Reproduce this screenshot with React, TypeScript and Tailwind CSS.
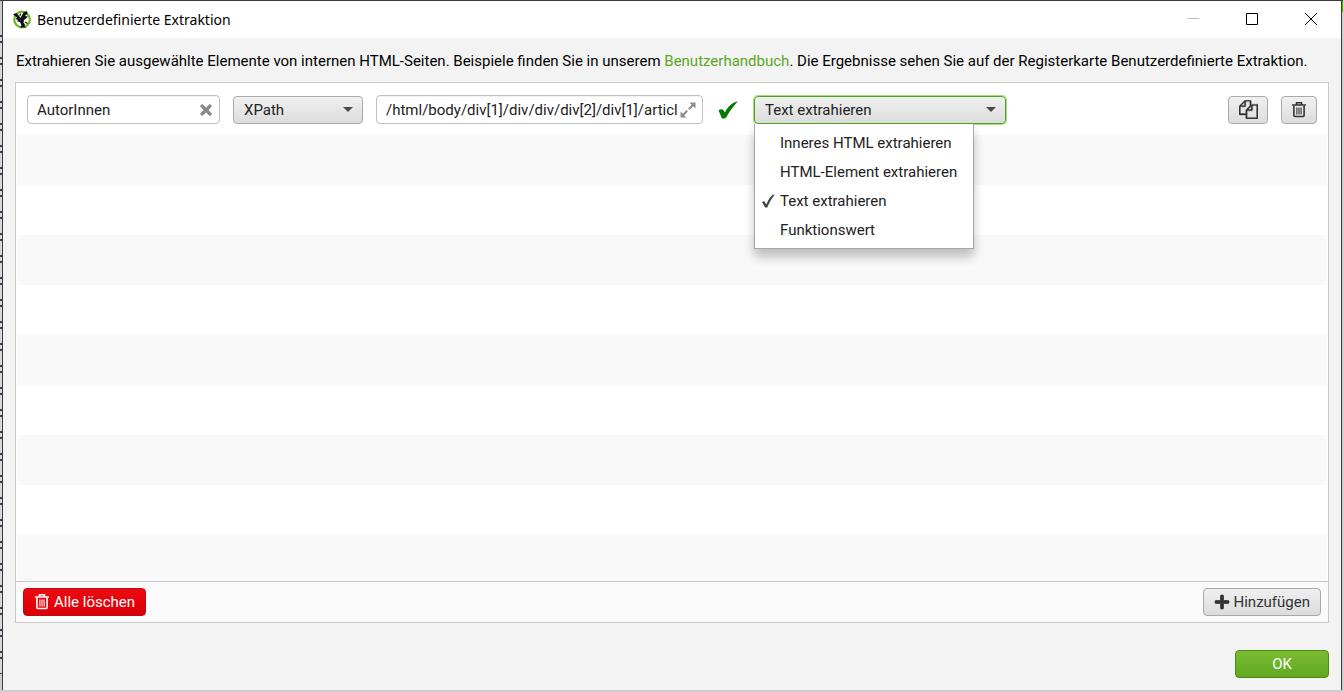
import React, { useState } from 'react';
import { FaPlus, FaTimes } from 'react-icons/fa';

const extractModes = [
  'Inneres HTML extrahieren',
  'HTML-Element extrahieren',
  'Text extrahieren',
  'Funktionswert',
];

const buttonBase = 'flex h-7 items-center justify-center rounded-sm border border-[#a9a9a9] bg-linear-to-b from-[#f0f0f0] to-[#dcdcdc] text-[#333333]';
const selectBase = 'h-7 w-full appearance-none rounded-sm border bg-linear-to-b from-[#f0f0f0] to-[#dcdcdc] px-2.5';
const inputBase = 'h-[29px] w-full rounded-sm border border-[#c0c0c0] bg-white pl-[9px] inset-shadow-2xs outline-none';

function AppLogo() {
  return (
    <svg viewBox="0 0 20 20" className="size-5" aria-hidden="true">
      <circle cx="10" cy="9.500" r="7.800" fill="#fff" stroke="#6cb52d" strokeWidth="2.200" />
      <path d="M1 4.500 4 3 6 4.500 8.500 8 9.500 6 11.500 2.500 15 1 15.500 3.500 13 6 16 6.500 14 8.500 12 10 11.500 12.500 13 14.500 12.500 16 14.500 17.500H8L9.500 15.500 8 12 5 11.500 6 10 3.500 9 5 7.500z" fill="#101010" />
      <path d="M8.500 3.500 8 6M13 12l2.500 1.500" stroke="#101010" strokeWidth="1.200" />
    </svg>
  );
}

function CopyIcon() {
  return (
    <svg viewBox="0 0 1792 1792" className="size-[19px]" fill="currentColor" stroke="currentColor" strokeWidth="40" aria-hidden="true">
      <path d="M1696 384q40 0 68 28t28 68v1216q0 40-28 68t-68 28H736q-40 0-68-28t-28-68v-288H96q-40 0-68-28t-28-68V672q0-40 20-88t48-76L476 100q28-28 76-48t88-20h416q40 0 68 28t28 68v328q68-40 128-40h416zm-544 213L853 896h299V597zM512 213L213 512h299V213zm196 647l316-316V128H640v416q0 40-28 68t-68 28H128v640h512v-256q0-40 20-88t48-76zm956 804V512h-384v416q0 40-28 68t-68 28H768v640h896z" />
    </svg>
  );
}

function TrashIcon() {
  return (
    <svg viewBox="0 0 16 16" className="size-4" fill="none" stroke="currentColor" aria-hidden="true">
      <path d="M1 3h14M5.500 2.500V.8h5v1.700" strokeWidth="1.500" />
      <path d="M2.900 4v9.500q0 1 1 1h8.200q1 0 1-1V4" strokeWidth="1.600" />
      <path d="M5.900 5.500v7M8 5.500v7M10.100 5.500v7" strokeWidth="1.100" />
    </svg>
  );
}

function ExpandIcon() {
  return (
    <svg viewBox="0 0 16 16" className="size-4" fill="none" stroke="#8c8c8c" strokeWidth="2" aria-hidden="true">
      <path d="M8.800 7.200 13.500 2.500M7.200 8.800 2.500 13.500" />
      <path d="M9.500.5h6v6zM.5 9.500v6h6z" fill="#8c8c8c" stroke="none" />
    </svg>
  );
}

function Caret() {
  return (
    <svg viewBox="0 0 10 5" className="pointer-events-none absolute top-[11px] right-2.5 h-[5px] w-2.5" fill="#4a4a4a" aria-hidden="true">
      <path d="M0 0h10L5 5z" />
    </svg>
  );
}

export default function App() {
  const [name, setName] = useState('AutorInnen');
  const [expression, setExpression] = useState('/html/body/div[1]/div/div/div[2]/div[1]/article');
  const [mode, setMode] = useState('Text extrahieren');

  return (
    <div className="flex min-h-screen border-t border-[#3c3c3c] bg-[#cccccc] pb-0.5 font-['Roboto',sans-serif] text-[15px] leading-5 text-[#222222]">
      {/* Edge of the window behind the dialog */}
      <div className="mt-[34px] mb-4 w-0.5 shrink-0 bg-[repeating-linear-gradient(to_bottom,#3a3a5c_0px,#3a3a5c_2px,#d8d8d8_2px,#d8d8d8_6px,#3a3a5c_6px,#3a3a5c_8px,#d8d8d8_8px,#d8d8d8_22px)]" />
      <div className="flex min-w-0 grow flex-col border-x border-[#3c3c3c] bg-[#f3f3f3]">
        {/* Title bar */}
        <header className="flex h-[37px] items-center justify-between bg-white pr-6 pl-[9px] text-black">
          <div className="flex items-center gap-[5px]">
            <AppLogo />
            <h1 className="font-['Noto_Sans',sans-serif] text-sm">Benutzerdefinierte Extraktion</h1>
          </div>
          <div className="flex gap-[46px]">
            <button aria-label="Minimieren">
              <svg viewBox="0 0 13 13" className="size-[13px]" stroke="#bcbcbc"><path d="M1 5.500h12" /></svg>
            </button>
            <button aria-label="Maximieren">
              <svg viewBox="0 0 13 13" className="size-[13px]" fill="none" stroke="#000"><path d="M1.500.5h11v11h-11z" /></svg>
            </button>
            <button aria-label="Schließen">
              <svg viewBox="0 0 13 13" className="size-[13px]" stroke="#000"><path d="m1 0 12 12m0-12-12 12" /></svg>
            </button>
          </div>
        </header>

        <main className="flex grow flex-col px-3 pt-[13px] pb-3">
          <p className="px-px text-black">
            Extrahieren Sie ausgewählte Elemente von internen HTML-Seiten. Beispiele finden Sie in unserem{' '}
            <a href="#handbuch" className="text-[#5ba623]">Benutzerhandbuch</a>
            . Die Ergebnisse sehen Sie auf der Registerkarte Benutzerdefinierte Extraktion.
          </p>

          <section className="mt-[11px] flex grow flex-col border border-[#c8c8c8] bg-white">
            <div className="flex grow flex-col px-px">
              {/* Extractor row */}
              <div className="flex h-[52px] items-center px-2.5 pt-px">
                <div className="relative w-[193px]">
                  <input aria-label="Name" className={inputBase} value={name} onChange={e => setName(e.target.value)} />
                  <button aria-label="Leeren" onClick={() => setName('')} className="absolute top-[7px] right-1.5 text-[#8a8a8a]">
                    <FaTimes className="size-4" stroke="currentColor" strokeWidth="24" />
                  </button>
                </div>
                <div className="relative ml-[13px] w-[130px]">
                  <select aria-label="Selektor" className={`${selectBase} border-[#a9a9a9]`} defaultValue="XPath">
                    <option>XPath</option>
                    <option>CSSPath</option>
                    <option>Regex</option>
                  </select>
                  <Caret />
                </div>
                <div className="relative ml-[13px] w-[327px]">
                  <input aria-label="Ausdruck" className={`${inputBase} pr-6`} value={expression} onChange={e => setExpression(e.target.value)} />
                  <button aria-label="Erweitern" className="absolute top-[7px] right-[7px]">
                    <ExpandIcon />
                  </button>
                </div>
                <svg viewBox="0 0 20 18" className="ml-[15px] h-[18px] w-5" fill="#047a04" aria-label="Gültig">
                  <path d="M.5 9.500C2 8 4.500 7.800 5.400 9L6.800 11.500C9.500 6.500 13.500 1.500 20 .2 15.500 5 11.500 10 8.500 16 7 18 4.500 18.200 3.500 16.800 2.500 14 1.500 11.500.5 9.500z" />
                </svg>
                <div className="relative ml-4 w-[252px]">
                  <select
                    aria-label="Extraktionsmodus"
                    className={`${selectBase} border-[#4fa51c] ring-1 ring-[#a5dc7c]`}
                    value={mode}
                    onChange={e => setMode(e.target.value)}
                  >
                    {extractModes.map(m => <option key={m}>{m}</option>)}
                  </select>
                  <Caret />
                  <ul role="listbox" aria-label="Extraktionsmodus" className="absolute top-7 left-0 z-10 w-[220px] border border-t-0 border-[#a8a8a8] bg-white pt-[5px] pb-[3px] shadow-[0_8px_10px_rgba(0,0,0,0.24)]">
                    {extractModes.map(m => (
                      <li
                        key={m}
                        role="option"
                        aria-selected={m === mode}
                        onClick={() => setMode(m)}
                        className="flex h-[29px] items-center gap-1 pl-[7px] whitespace-nowrap"
                      >
                        <span className="w-3.5">
                          {m === mode && (
                            <svg viewBox="0 0 14 14" className="size-3.5" fill="#444">
                              <path d="M0 8 2.200 7l2 3.500C6 6.500 8 3 10.500.7h2.200C9.500 4.500 7 9 5.300 13.500H3.100z" />
                            </svg>
                          )}
                        </span>
                        {m}
                      </li>
                    ))}
                  </ul>
                </div>
                <button aria-label="Duplizieren" className={`${buttonBase} ml-auto w-10`}>
                  <CopyIcon />
                </button>
                <button aria-label="Löschen" className={`${buttonBase} ml-[13px] w-9`}>
                  <TrashIcon />
                </button>
              </div>
              {/* Empty rows */}
              <div className="grow bg-[repeating-linear-gradient(to_bottom,#f9f9f9_0px,#f9f9f9_50px,#ffffff_50px,#ffffff_100px)]" />
            </div>

            <div className="flex items-center justify-between border-t border-[#c8c8c8] bg-[#fbfbfb] px-[7px] py-1.5">
              <button className="flex h-7 items-center gap-1 rounded-sm border border-[#b80d12] bg-linear-to-b from-[#ee0a10] to-[#da0007] px-2.5 text-white">
                <TrashIcon />
                Alle löschen
              </button>
              <button className={`${buttonBase} gap-1 px-2.5`}>
                <FaPlus className="size-4" stroke="currentColor" strokeWidth="24" />
                Hinzufügen
              </button>
            </div>
          </section>

          <button className="mt-[27px] h-7 w-[94px] self-end rounded-sm border border-[#488a18] bg-linear-to-b from-[#7abc32] to-[#62a822] text-white">
            OK
          </button>
        </main>
      </div>
      <div className="w-px shrink-0 bg-linear-to-b from-[#57a817] from-[11px] to-[#cccccc] to-[11px]" />
    </div>
  );
}
